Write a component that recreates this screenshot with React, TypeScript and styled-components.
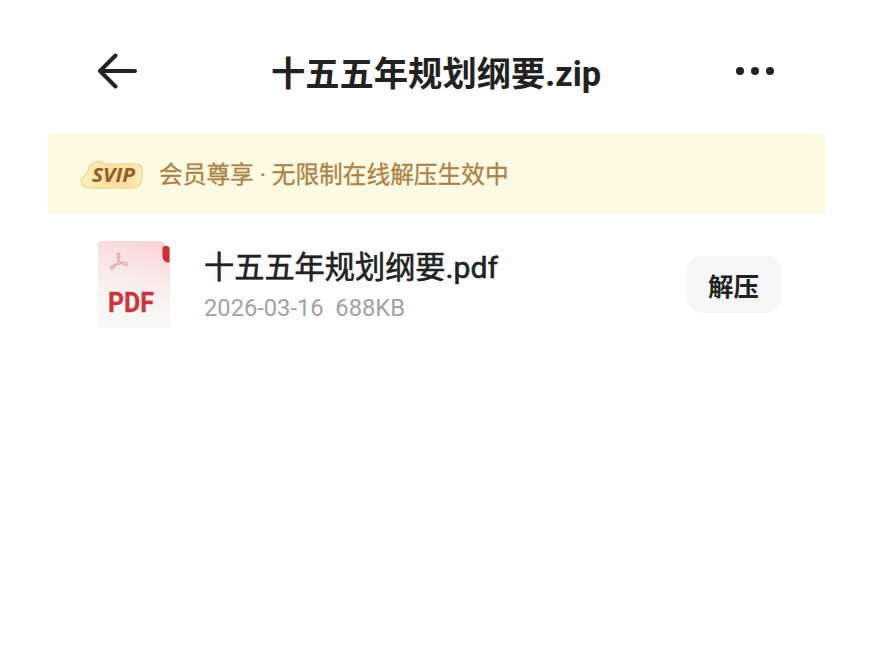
import React from 'react';
import styled, { createGlobalStyle } from 'styled-components';

const GlobalStyle = createGlobalStyle`
  * {
    box-sizing: border-box;
  }
  body {
    margin: 0;
    background: #fefefe;
    font-family: Roboto, 'Noto Sans CJK SC', sans-serif;
    color: #222;
  }
`;

const Page = styled.div`
  width: 872px;
  height: 672px;
  padding: 16px 47px 0 48px;
  overflow: hidden;
`;

const Header = styled.header`
  height: 118px;
  padding: 0 50px 8px 49px;
  display: grid;
  grid-template-columns: 40px 1fr 40px;
  align-items: center;
`;

const IconButton = styled.button`
  display: flex;
  padding: 0;
  border: 0;
  background: none;
  cursor: pointer;
`;

const Title = styled.h1`
  margin: 5px 0 0;
  font-size: 34.3px;
  line-height: 48px;
  font-weight: 700;
  text-align: center;
  white-space: nowrap;
`;

const Banner = styled.div`
  height: 79px;
  padding: 3px 0 0 32px;
  display: flex;
  align-items: center;
  background: #fdfae3;
  box-shadow: 0 0 3px #fdfbec;
`;

const BannerText = styled.span`
  margin-left: 15px;
  font-size: 23.7px;
  line-height: 34px;
  color: #ac8345;
  white-space: nowrap;
  -webkit-text-stroke: 0.3px #ac8345;
`;

const FileRow = styled.div`
  height: 142px;
  padding: 0 44px 0 49px;
  display: flex;
  align-items: center;
`;

const FileInfo = styled.div`
  flex: 1;
  margin-left: 34px;
  padding-top: 5px;
`;

const FileName = styled.div`
  font-size: 30.2px;
  line-height: 42px;
  font-weight: 400;
  white-space: nowrap;
  -webkit-text-stroke: 0.6px #222;
`;

const FileMeta = styled.div`
  font-size: 23.7px;
  line-height: 38px;
  color: #a3a3a3;
  white-space: pre;
`;

const ExtractButton = styled.button`
  width: 94px;
  height: 57px;
  padding: 1px 1px 0 0;
  border: 0;
  border-radius: 15px;
  background: #f6f6f6;
  color: #222;
  font-family: inherit;
  font-size: 25.5px;
  font-weight: 700;
  cursor: pointer;
`;

const BackIcon = () => (
  <svg width="40" height="36" viewBox="0 0 40 36" fill="none" stroke="#222" strokeWidth="4" strokeLinecap="round" strokeLinejoin="round">
    <path d="M18.500 2.500 3 18 18.500 33.500M3 18H38" />
  </svg>
);

const MoreIcon = () => (
  <svg width="40" height="10" viewBox="0 0 40 10" fill="#222">
    <circle cx="5" cy="5" r="4" />
    <circle cx="20" cy="5" r="4" />
    <circle cx="35" cy="5" r="4" />
  </svg>
);

const SvipBadge = () => (
  <svg width="64" height="30" viewBox="0 0 64 30">
    <defs>
      <linearGradient id="badge" x1="0" y1="0" x2="1" y2="0">
        <stop offset="0" stopColor="#fbf3c0" />
        <stop offset="0.5" stopColor="#f9dc9b" />
        <stop offset="0.8" stopColor="#fbe0a4" />
        <stop offset="1" stopColor="#fbf0be" />
      </linearGradient>
    </defs>
    <path
      d="M8 11C9 5 13 1.500 18 1.500C22 1.500 23 4 27 4H55C60.500 4 63 7 62.500 12L61.500 20C60.500 26 58 28 53 28H10C4 28 1 25 1.500 20C2 15.500 7 15 8 11Z"
      fill="url(#badge)"
      stroke="#ecdb98"
      strokeWidth="1.500"
    />
    <text x="12" y="22" fill="#8c5f2c" fontFamily="Open Sans, sans-serif" fontSize="19.500" fontWeight="700" fontStyle="italic" textLength="43" lengthAdjust="spacingAndGlyphs">
      SVIP
    </text>
  </svg>
);

const PdfIcon = () => (
  <svg width="73" height="88" viewBox="0 0 73 88">
    <defs>
      <linearGradient id="sheet" x1="0.7" y1="0" x2="0.5" y2="1">
        <stop offset="0" stopColor="#f9d5d5" />
        <stop offset="0.45" stopColor="#f9ebeb" />
        <stop offset="0.8" stopColor="#f7f7f6" />
        <stop offset="1" stopColor="#f6f7f7" />
      </linearGradient>
    </defs>
    <path d="M5 1H64L73 9V84Q73 88 69 88H5Q1 88 1 84V5Q1 1 5 1Z" fill="url(#sheet)" />
    <path d="M65.500 8Q65.500 6 67.500 6H70Q72.500 6 72.500 9V22.500H70Q66 21 65.500 17Z" fill="#cb3037" />
    <g fill="none" stroke="#e5adb2" strokeWidth="1.500">
      <path d="M21.500 13C19 14 21 18 21.500 21L18 25C14 25.500 12 28 14.500 29C17 29 17.500 26 18 25L25 23C27 26 31 26 30.500 24C30 22 27 22 25 23L21.500 20C23 16 23 13 21.500 13Z" />
    </g>
    <text x="11" y="72" fill="#cb353d" stroke="#cb353d" strokeWidth="0.3" fontFamily="Roboto, sans-serif" fontSize="28" fontWeight="700" textLength="46" lengthAdjust="spacingAndGlyphs">
      PDF
    </text>
  </svg>
);

const App: React.FC = () => (
  <>
    <GlobalStyle />
    <Page>
      <Header>
        <IconButton aria-label="返回">
          <BackIcon />
        </IconButton>
        <Title>十五五年规划纲要.zip</Title>
        <IconButton aria-label="更多">
          <MoreIcon />
        </IconButton>
      </Header>
      <Banner>
        <SvipBadge />
        <BannerText>会员尊享 · 无限制在线解压生效中</BannerText>
      </Banner>
      <FileRow>
        <PdfIcon />
        <FileInfo>
          <FileName>十五五年规划纲要.pdf</FileName>
          <FileMeta>2026-03-16  688KB</FileMeta>
        </FileInfo>
        <ExtractButton>解压</ExtractButton>
      </FileRow>
    </Page>
  </>
);

export default App;
